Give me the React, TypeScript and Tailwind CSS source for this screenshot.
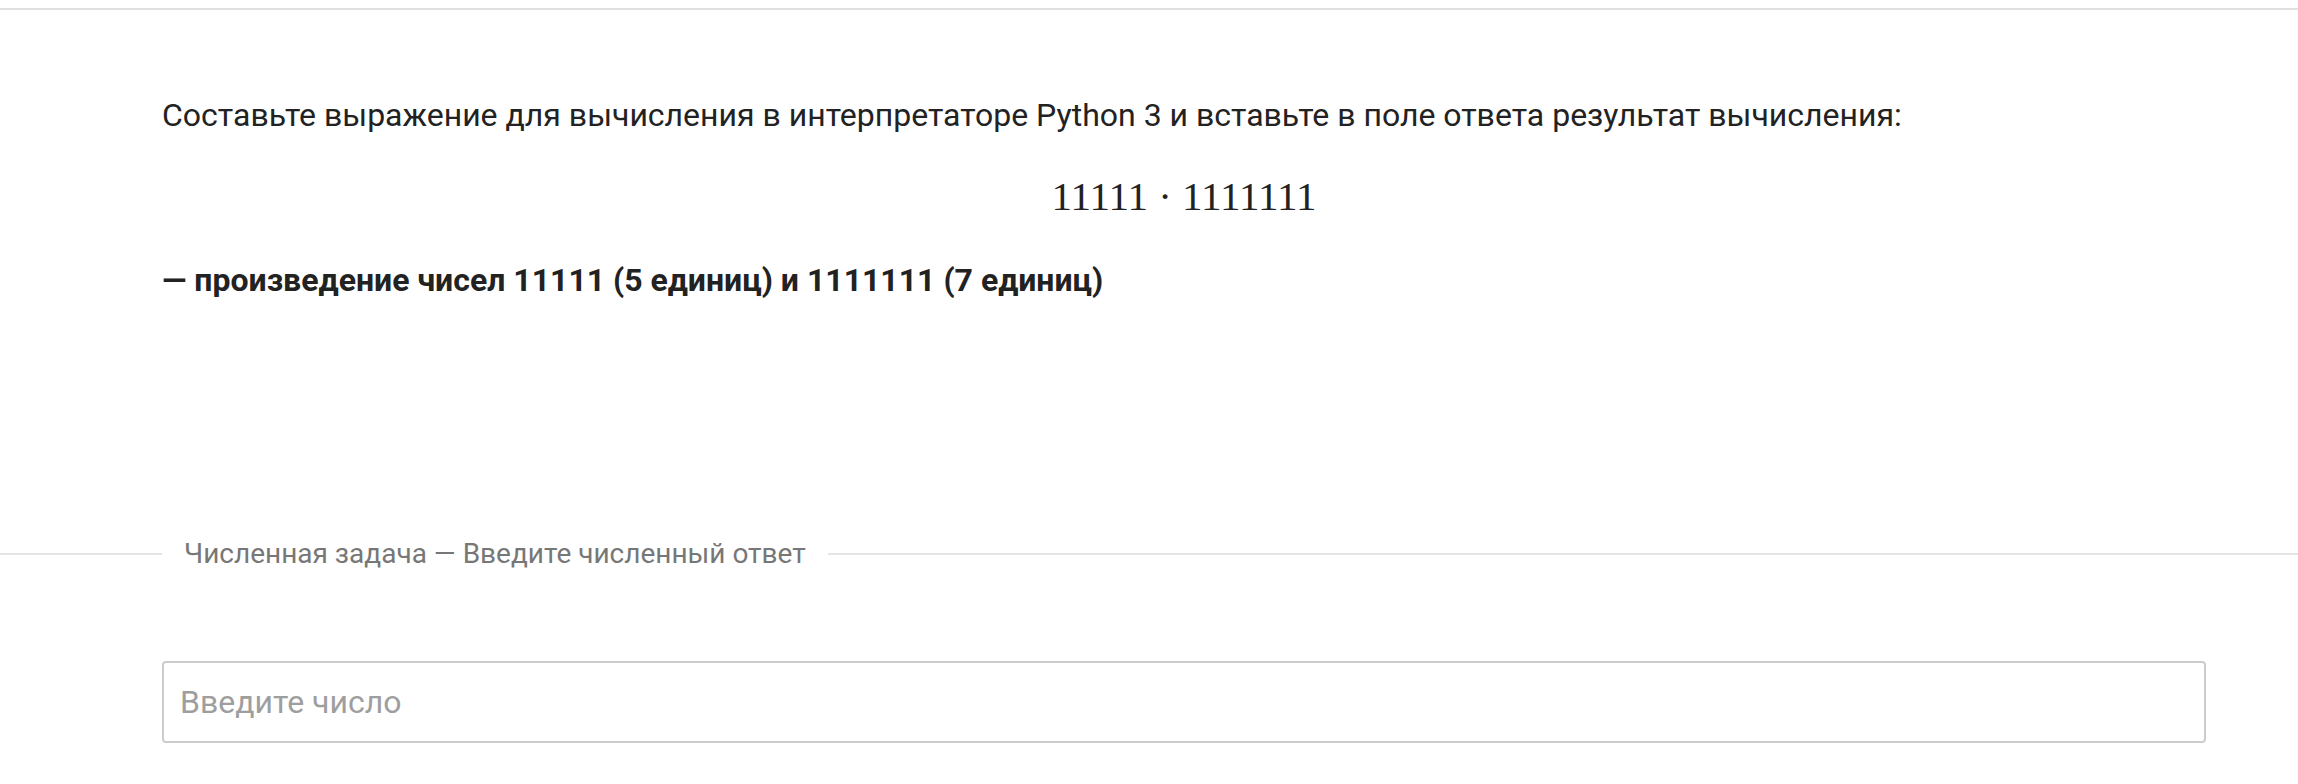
import React, { useState } from 'react';

const App: React.FC = () => {
  const [answer, setAnswer] = useState<string>('');

  return (
    <main className="min-h-screen w-full bg-white font-['Roboto',sans-serif] text-[#222]">
      <div className="pt-[8px]">
        <div className="h-[2px] w-full bg-[#e0e0e0]"></div>
      </div>

      {/* условие задачи */}
      <section className="pl-[162px] pr-[92px] pt-[81px]">
        <p className="text-[32px] leading-[48px]">
          Составьте выражение для вычисления в интерпретаторе Python 3 и вставьте в поле ответа результат вычисления:
        </p>
        <div className="mt-[33px] text-center font-['Liberation_Serif',serif] text-[41px] leading-[48px]">
          11111 · 1111111
        </div>
        <p className="mt-[36px] text-[32px] leading-[48px] font-bold">
          — произведение чисел 11111 (5 единиц) и 1111111 (7 единиц)
        </p>
      </section>

      {/* тип задачи */}
      <div className="mt-[233px] flex items-center">
        <div className="h-[2px] w-[162px] bg-[#e5e5e5]"></div>
        <span className="px-[22px] text-[28px] leading-[34px] text-[#777]">
          Численная задача — Введите численный ответ
        </span>
        <div className="h-[2px] flex-1 bg-[#e5e5e5]"></div>
      </div>

      {/* поле ответа */}
      <div className="pl-[162px] pr-[92px] pt-[90px]">
        <input
          type="text"
          value={answer}
          onChange={(e) => setAnswer(e.target.value)}
          placeholder="Введите число"
          className="h-[82px] w-full rounded-[4px] border-2 border-[#cccccc] px-[16px] text-[32px] text-[#222] placeholder-[#9e9e9e] focus:outline-none"
        />
      </div>
    </main>
  );
};

export default App;
